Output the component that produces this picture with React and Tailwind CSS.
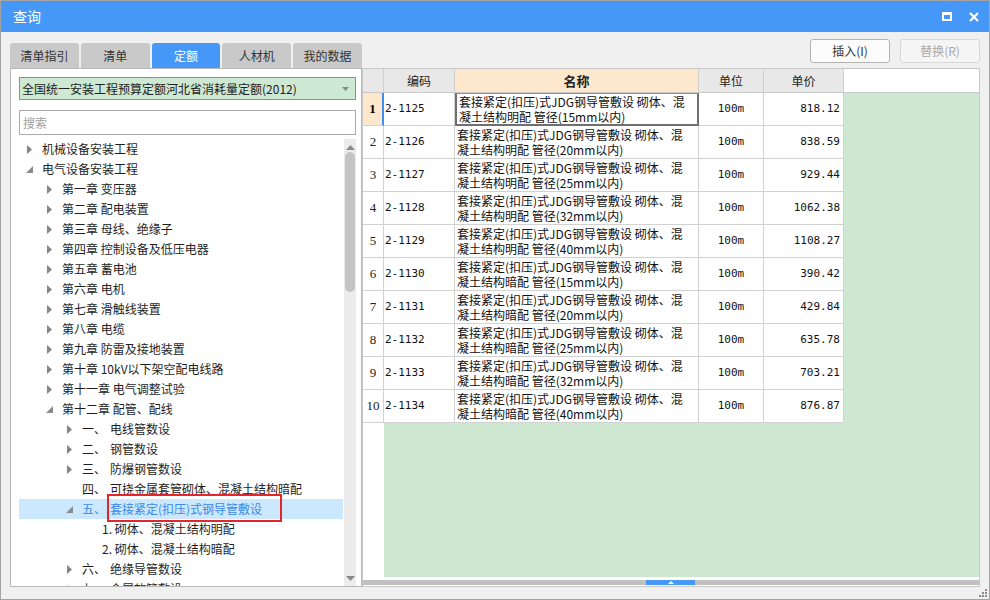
import React from 'react';

const tabs = ['清单指引', '清单', '定额', '人材机', '我的数据'];

const tree = [
  { l: 0, a: 'r', t: '机械设备安装工程' },
  { l: 0, a: 'd', t: '电气设备安装工程' },
  { l: 1, a: 'r', t: '第一章 变压器' },
  { l: 1, a: 'r', t: '第二章 配电装置' },
  { l: 1, a: 'r', t: '第三章 母线、绝缘子' },
  { l: 1, a: 'r', t: '第四章 控制设备及低压电器' },
  { l: 1, a: 'r', t: '第五章 蓄电池' },
  { l: 1, a: 'r', t: '第六章 电机' },
  { l: 1, a: 'r', t: '第七章 滑触线装置' },
  { l: 1, a: 'r', t: '第八章 电缆' },
  { l: 1, a: 'r', t: '第九章 防雷及接地装置' },
  { l: 1, a: 'r', t: '第十章 10kV以下架空配电线路' },
  { l: 1, a: 'r', t: '第十一章 电气调整试验' },
  { l: 1, a: 'd', t: '第十二章 配管、配线' },
  { l: 2, a: 'r', p: '一、', t: '电线管数设' },
  { l: 2, a: 'r', p: '二、', t: '钢管数设' },
  { l: 2, a: 'r', p: '三、', t: '防爆钢管数设' },
  { l: 2, a: null, p: '四、', t: '可挠金属套管砌体、混凝土结构暗配' },
  { l: 2, a: 'd', p: '五、', t: '套接紧定(扣压)式钢导管敷设', sel: true },
  { l: 3, a: null, t: '1. 砌体、混凝土结构明配' },
  { l: 3, a: null, t: '2. 砌体、混凝土结构暗配' },
  { l: 2, a: 'r', p: '六、', t: '绝缘导管数设' },
  { l: 2, a: 'r', p: '七、', t: '金属软管敷设' },
];

const rows = [
  ['2-1125', '明配', '15', '818.12'],
  ['2-1126', '明配', '20', '838.59'],
  ['2-1127', '明配', '25', '929.44'],
  ['2-1128', '明配', '32', '1062.38'],
  ['2-1129', '明配', '40', '1108.27'],
  ['2-1130', '暗配', '15', '390.42'],
  ['2-1131', '暗配', '20', '429.84'],
  ['2-1132', '暗配', '25', '635.78'],
  ['2-1133', '暗配', '32', '703.21'],
  ['2-1134', '暗配', '40', '876.87'],
];

const indent = ['pl-[4px]', 'pl-[24px]', 'pl-[44px]', 'pl-[64px]'];

function Arrow({ kind }) {
  if (kind === 'r') {
    return (
      <svg width="5" height="9" viewBox="0 0 5 9">
        <path d="M0 0L5 4.5L0 9Z" fill="#858585" />
      </svg>
    );
  }
  if (kind === 'd') {
    return (
      <svg width="7" height="7" viewBox="0 0 7 7">
        <path d="M7 0L7 7L0 7Z" fill="#8a8a8a" />
      </svg>
    );
  }
  return null;
}

function TreeRow({ item }) {
  return (
    <div
      className={`flex h-[20px] items-center whitespace-nowrap ${indent[item.l]} ${
        item.sel ? 'bg-[#cce8ff] text-[#3a8ae6]' : 'text-[#1e1e1e]'
      }`}
    >
      <span className="mr-[7px] flex w-[12px] items-center justify-center">
        <Arrow kind={item.a} />
      </span>
      {item.p && <span className="w-[28px]">{item.p}</span>}
      <span>{item.t}</span>
    </div>
  );
}

function App() {
  return (
    <div
      className="flex h-[600px] w-[990px] flex-col border border-[#a3a3a3] bg-[#f0f0f0] text-[12px]"
      style={{ fontFamily: '"Noto Sans CJK SC", "Microsoft YaHei", sans-serif' }}
    >
      {/* Title bar */}
      <div className="flex h-[31px] shrink-0 items-center justify-between bg-[#4598f8] pl-[12px] pr-[10px] text-white">
        <span className="text-[14px]">查询</span>
        <div className="flex items-center gap-[17px]">
          <span className="block h-[9px] w-[10px] border-2 border-t-[3px] border-white"></span>
          <svg width="10" height="10" viewBox="0 0 10 10">
            <path d="M1 1L9 9M9 1L1 9" stroke="white" strokeWidth="2.2" />
          </svg>
        </div>
      </div>

      {/* Body */}
      <div className="relative flex min-h-0 flex-1 px-[9px] pb-[12px]">
        {/* Left column */}
        <div className="flex w-[352px] flex-col">
          <div className="mt-[11px] flex h-[25px] gap-[2px]">
            {tabs.map((t) => (
              <div
                key={t}
                className={`flex w-[78px] items-center justify-center rounded-t-[3px] text-[12px] ${
                  t === '定额' ? 'bg-[#4598f8] text-white' : 'bg-[#c9c9c9] text-[#333]'
                }`}
              >
                {t}
              </div>
            ))}
          </div>
          <div className="flex min-h-0 flex-1 flex-col border border-[#b9b9b9] bg-white pb-0 pl-[8px] pr-[5px] pt-[8px]">
            <div className="flex h-[23px] shrink-0 items-center justify-between border border-[#4a9ff5] bg-[#cde8d3] pl-[2px] pr-[6px] text-[#222]">
              <span>全国统一安装工程预算定额河北省消耗量定额(2012)</span>
              <svg width="7" height="4" viewBox="0 0 7 4">
                <path d="M0 0H7L3.5 4Z" fill="#888" />
              </svg>
            </div>
            <div className="mt-[10px] flex h-[25px] shrink-0 items-center border border-[#ababab] pl-[3px] text-[#a0a0a0]">
              搜索
            </div>
            <div className="mt-[4px] flex min-h-0 flex-1 overflow-hidden">
              <div className="relative min-w-0 flex-1 overflow-hidden">
                {tree.map((item, i) => (
                  <TreeRow key={i} item={item} />
                ))}
                <div className="absolute left-[88px] top-[355px] h-[28px] w-[175px] border-2 border-[#e3262b]"></div>
              </div>
              <div className="ml-[1px] flex w-[12px] flex-col items-center bg-[#ececec]">
                <div className="flex h-[11px] items-end">
                  <svg width="9" height="5" viewBox="0 0 9 5">
                    <path d="M0 5L4.5 0L9 5Z" fill="#888" />
                  </svg>
                </div>
                <div className="mt-[2px] h-[140px] w-[10px] rounded-full bg-[#c4c4c4]"></div>
                <div className="flex-1"></div>
                <div className="mb-[4px] flex h-[8px] items-center">
                  <svg width="9" height="5" viewBox="0 0 9 5">
                    <path d="M0 0L9 0L4.5 5Z" fill="#888" />
                  </svg>
                </div>
              </div>
            </div>
          </div>
        </div>

        {/* Right column */}
        <div className="flex min-w-0 flex-1 flex-col">
          <div className="flex h-[36px] shrink-0 items-start justify-end gap-[10px] pt-[7px]">
            <button className="h-[24px] w-[80px] rounded-[3px] border border-[#b4b4b4] bg-[#fcfcfc] text-[12px] text-[#333]">
              插入(I)
            </button>
            <button className="h-[24px] w-[80px] rounded-[3px] border border-[#d8d8d8] bg-[#f5f5f5] text-[12px] text-[#a9a9a9]">
              替换(R)
            </button>
          </div>
          <div className="flex min-h-0 flex-1 flex-col border border-[#c8c8c8] bg-white">
            {/* Header */}
            <div className="flex h-[24px] shrink-0 border-b border-[#c8c8c8] text-[12px] text-[#222]">
              <div className="w-[21px] border-r border-[#cfcfcf] bg-[#e8e8e8]"></div>
              <div className="flex w-[71px] items-center justify-center border-r border-[#cfcfcf] bg-[#e8e8e8]">编码</div>
              <div className="flex w-[244px] items-center justify-center border-r border-[#cfcfcf] bg-[#fde8cd] text-[13px] font-bold">名称</div>
              <div className="flex w-[65px] items-center justify-center border-r border-[#cfcfcf] bg-[#e8e8e8]">单位</div>
              <div className="flex w-[80px] items-center justify-center border-r border-[#cfcfcf] bg-[#e8e8e8]">单价</div>
              <div className="flex-1 bg-white"></div>
            </div>
            {/* Body */}
            <div className="flex min-h-0 flex-1 overflow-hidden">
              <div className="flex w-[21px] flex-col bg-white">
                {rows.map((r, i) => (
                  <div
                    key={r[0]}
                    className={`flex h-[33px] shrink-0 items-center justify-center border-b border-r border-[#d2d2d2] text-[13px] ${
                      i === 0 ? 'border-r-2 border-r-[#3f8ff0] bg-[#fde8cd] font-bold' : 'text-[#222]'
                    }`}
                    style={{ fontFamily: '"Liberation Serif", serif' }}
                  >
                    {i + 1}
                  </div>
                ))}
              </div>
              <div className="flex min-w-0 flex-1 flex-col bg-[#cde7d0]">
                {rows.map((r, i) => (
                  <div key={r[0]} className="flex h-[33px] shrink-0 text-[#111]">
                    <div
                      className="flex w-[71px] items-center border-b border-r border-[#d2d2d2] bg-white pl-[1px] text-[11px]"
                      style={{ fontFamily: '"DejaVu Sans Mono", monospace' }}
                    >
                      {r[0]}
                    </div>
                    <div
                      className={`flex w-[244px] flex-col justify-center whitespace-nowrap bg-white pl-[2px] text-[12px] leading-[15px] ${
                        i === 0
                          ? 'border-2 border-t border-[#6f6f6f] border-t-[#4a9ff5]'
                          : 'border-b border-r border-[#d2d2d2]'
                      }`}
                    >
                      <span>套接紧定(扣压)式JDG钢导管敷设 砌体、混</span>
                      <span>凝土结构{r[1]} 管径({r[2]}mm以内)</span>
                    </div>
                    <div
                      className="flex w-[65px] items-center justify-center border-b border-r border-[#d2d2d2] bg-white text-[11px]"
                      style={{ fontFamily: '"DejaVu Sans Mono", monospace' }}
                    >
                      100m
                    </div>
                    <div
                      className="flex w-[80px] items-center justify-end border-b border-r border-[#d2d2d2] bg-white pr-[3px] text-[11px]"
                      style={{ fontFamily: '"DejaVu Sans Mono", monospace' }}
                    >
                      {r[3]}
                    </div>
                  </div>
                ))}
                <div className="mt-[1px] flex-1"></div>
              </div>
            </div>
            <div className="h-[3px] shrink-0 bg-white"></div>
            <div className="flex h-[5px] shrink-0 bg-[#c0c0c0] pl-[283px]">
              <div className="flex h-[5px] w-[49px] items-center justify-center bg-[#4598f8]">
                <svg width="6" height="3" viewBox="0 0 6 3">
                  <path d="M0 3L3 0L6 3Z" fill="white" />
                </svg>
              </div>
            </div>
            <div className="h-[1px] shrink-0 bg-white"></div>
          </div>
        </div>

        {/* Resize grip */}
        <div className="absolute bottom-[2px] right-[2px] grid grid-cols-3 gap-[1px]">
          <span className="h-[2px] w-[2px]"></span>
          <span className="h-[2px] w-[2px]"></span>
          <span className="h-[2px] w-[2px] bg-[#8a8a8a]"></span>
          <span className="h-[2px] w-[2px]"></span>
          <span className="h-[2px] w-[2px] bg-[#8a8a8a]"></span>
          <span className="h-[2px] w-[2px] bg-[#8a8a8a]"></span>
          <span className="h-[2px] w-[2px] bg-[#8a8a8a]"></span>
          <span className="h-[2px] w-[2px] bg-[#8a8a8a]"></span>
          <span className="h-[2px] w-[2px] bg-[#8a8a8a]"></span>
        </div>
      </div>
    </div>
  );
}

export default App;
